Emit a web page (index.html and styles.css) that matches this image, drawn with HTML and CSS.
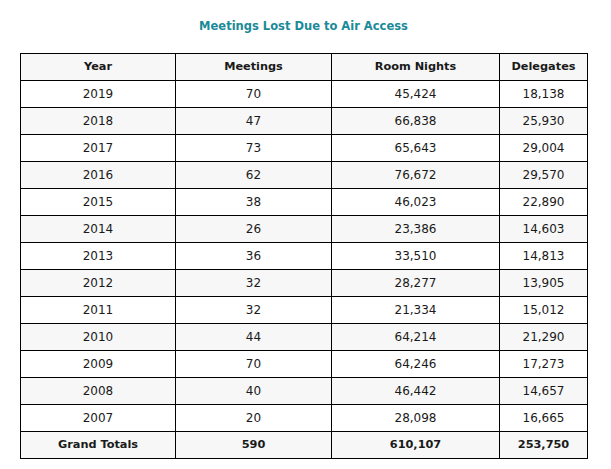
FILE: index.html
```html
<!DOCTYPE html>
<html>
<head>
<meta charset="utf-8">
<link rel="stylesheet" href="styles.css">
</head>
<body>
<h1 class="title">Meetings Lost Due to Air Access</h1>
<table class="data">
<colgroup><col class="c1"><col class="c2"><col class="c3"><col class="c4"></colgroup>
<thead>
<tr><th>Year</th><th>Meetings</th><th>Room Nights</th><th>Delegates</th></tr>
</thead>
<tbody>
<tr><td>2019</td><td>70</td><td>45,424</td><td>18,138</td></tr>
<tr><td>2018</td><td>47</td><td>66,838</td><td>25,930</td></tr>
<tr><td>2017</td><td>73</td><td>65,643</td><td>29,004</td></tr>
<tr><td>2016</td><td>62</td><td>76,672</td><td>29,570</td></tr>
<tr><td>2015</td><td>38</td><td>46,023</td><td>22,890</td></tr>
<tr><td>2014</td><td>26</td><td>23,386</td><td>14,603</td></tr>
<tr><td>2013</td><td>36</td><td>33,510</td><td>14,813</td></tr>
<tr><td>2012</td><td>32</td><td>28,277</td><td>13,905</td></tr>
<tr><td>2011</td><td>32</td><td>21,334</td><td>15,012</td></tr>
<tr><td>2010</td><td>44</td><td>64,214</td><td>21,290</td></tr>
<tr><td>2009</td><td>70</td><td>64,246</td><td>17,273</td></tr>
<tr><td>2008</td><td>40</td><td>46,442</td><td>14,657</td></tr>
<tr><td>2007</td><td>20</td><td>28,098</td><td>16,665</td></tr>
<tr class="total"><td>Grand Totals</td><td>590</td><td>610,107</td><td>253,750</td></tr>
</tbody>
</table>
</body>
</html>
```
FILE: styles.css
```css
html, body {
  margin: 0;
  padding: 0;
  background: #ffffff;
}
body {
  font-family: "DejaVu Sans", "Liberation Sans", sans-serif;
  color: #1a1a1a;
  padding: 18px 0 0 20px;
}
.title {
  margin: 0 0 19px 0;
  width: 567px;
  text-align: center;
  font-size: 11.5px;
  font-weight: bold;
  color: #1b8a98;
  line-height: 16px;
}
.data {
  border-collapse: collapse;
  width: 568px;
  table-layout: fixed;
  font-size: 12px;
}
.c1 { width: 155px; }
.c2 { width: 156px; }
.c3 { width: 168px; }
.c4 { width: 88px; }
.data th, .data td {
  border: 1px solid #000;
  height: 26px;
  padding: 0;
  text-align: center;
  vertical-align: middle;
  line-height: 14px;
}
.data th {
  font-weight: bold;
  font-size: 11.3px;
  background: #f7f7f7;
}
.data tbody tr:nth-child(even) td {
  background: #f7f7f7;
}
.data tr.total td {
  font-weight: bold;
  font-size: 11.3px;
  background: #f7f7f7;
}
```
